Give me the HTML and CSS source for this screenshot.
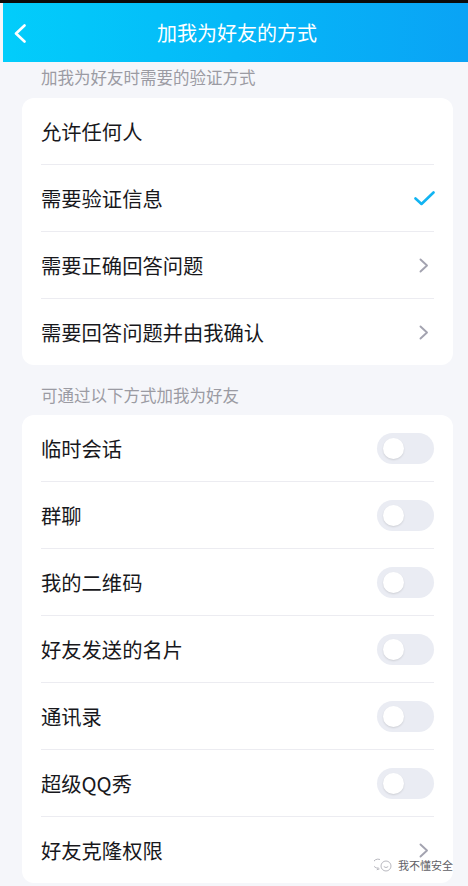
FILE: index.html
```html
<!DOCTYPE html>
<html lang="zh-CN">
<head>
<meta charset="utf-8">
<title>加我为好友的方式</title>
<link rel="stylesheet" href="styles.css">
</head>
<body>
<div class="page">
  <div class="statusbar"></div>
  <header class="navbar">
    <svg class="back" width="12" height="19" viewBox="0 0 12 19"><polyline points="10.5,1.5 2,9.5 10.5,17.5" fill="none" stroke="#fff" stroke-width="2.6" stroke-linecap="round" stroke-linejoin="round"/></svg>
    <h1 class="title">加我为好友的方式</h1>
  </header>

  <div class="section-title first">加我为好友时需要的验证方式</div>
  <div class="card">
    <div class="row"><span class="label">允许任何人</span></div>
    <div class="row"><span class="label">需要验证信息</span>
      <svg class="check" width="21" height="15" viewBox="0 0 21 15"><polyline points="1.5,7.5 7.5,13 19.5,1.5" fill="none" stroke="#12b4f2" stroke-width="2.6" stroke-linecap="round" stroke-linejoin="round"/></svg>
    </div>
    <div class="row"><span class="label">需要正确回答问题</span>
      <svg class="chev" width="10" height="15" viewBox="0 0 10 15"><polyline points="1.5,1.5 8,7.5 1.5,13.5" fill="none" stroke="#a3a3b0" stroke-width="1.9" stroke-linecap="round" stroke-linejoin="round"/></svg>
    </div>
    <div class="row"><span class="label">需要回答问题并由我确认</span>
      <svg class="chev" width="10" height="15" viewBox="0 0 10 15"><polyline points="1.5,1.5 8,7.5 1.5,13.5" fill="none" stroke="#a3a3b0" stroke-width="1.9" stroke-linecap="round" stroke-linejoin="round"/></svg>
    </div>
  </div>

  <div class="section-title">可通过以下方式加我为好友</div>
  <div class="card last">
    <div class="row"><span class="label">临时会话</span><span class="toggle"><span class="knob"></span></span></div>
    <div class="row"><span class="label">群聊</span><span class="toggle"><span class="knob"></span></span></div>
    <div class="row"><span class="label">我的二维码</span><span class="toggle"><span class="knob"></span></span></div>
    <div class="row"><span class="label">好友发送的名片</span><span class="toggle"><span class="knob"></span></span></div>
    <div class="row"><span class="label">通讯录</span><span class="toggle"><span class="knob"></span></span></div>
    <div class="row"><span class="label">超级QQ秀</span><span class="toggle"><span class="knob"></span></span></div>
    <div class="row"><span class="label">好友克隆权限</span>
      <svg class="chev" width="10" height="15" viewBox="0 0 10 15"><polyline points="1.5,1.5 8,7.5 1.5,13.5" fill="none" stroke="#a3a3b0" stroke-width="1.9" stroke-linecap="round" stroke-linejoin="round"/></svg>
    </div>
  </div>

  <div class="watermark">
    <svg width="19" height="14" viewBox="0 0 19 14"><path d="M6 1.5 a5 4.5 0 1 0 -1.5 8.6 l-1.6 1.6 2.6 -0.8" fill="none" stroke="#b9b9c0" stroke-width="1"/><circle cx="12" cy="8" r="5" fill="none" stroke="#b9b9c0" stroke-width="1"/><path d="M9.8 8.6 q2.2 2 4.4 0" fill="none" stroke="#b9b9c0" stroke-width="1"/></svg>
    <span>我不懂安全</span>
  </div>
</div>
</body>
</html>
```

FILE: styles.css
```css
html, body {
  margin: 0;
  padding: 0;
  background: #f5f6fa;
}
body {
  width: 468px;
  height: 886px;
  overflow: hidden;
  font-family: "Noto Sans CJK SC", "Noto Sans", sans-serif;
}
.page {
  position: relative;
  height: 886px;
  display: flex;
  flex-direction: column;
}
.statusbar {
  height: 3px;
  background: #0b0b0b;
}
.navbar {
  height: 59px;
  margin-left: 3px;
  background: linear-gradient(90deg, #02cdfb 0%, #05b8f8 50%, #0aa3f5 100%);
  display: flex;
  align-items: center;
  justify-content: center;
  position: relative;
}
.back {
  position: absolute;
  left: 11px;
  top: 21px;
}
.title {
  margin: 0 0 0 3px;
  font-size: 20px;
  font-weight: 400;
  color: #ffffff;
  line-height: 24px;
}
.section-title {
  font-size: 16.5px;
  line-height: 24px;
  color: #9b9ba3;
  padding: 18px 0 8px 41px;
}
.section-title.first {
  padding-top: 3px;
  padding-bottom: 9px;
}
.card {
  margin: 0 15px 0 22px;
  background: #ffffff;
  border-radius: 12px;
}
.row {
  margin: 0 19px 0 19px;
  height: 66px;
  display: flex;
  align-items: center;
  justify-content: space-between;
}
.row + .row {
  border-top: 1px solid #ececf1;
}
.label {
  font-size: 20.3px;
  color: #18181c;
  line-height: 28px;
}
.check {
  margin-right: -1px;
  margin-top: 1px;
}
.chev {
  margin-right: 5px;
}
.toggle {
  width: 57px;
  height: 31px;
  border-radius: 16px;
  background: #eaecf3;
  display: flex;
  align-items: center;
  padding-left: 6px;
  box-sizing: border-box;
}
.knob {
  width: 21px;
  height: 21px;
  border-radius: 50%;
  background: #ffffff;
  box-shadow: 0 1px 2px rgba(0, 0, 0, 0.12);
}
.watermark {
  position: absolute;
  right: 15px;
  bottom: 14px;
  display: flex;
  align-items: center;
  gap: 5px;
  font-size: 11px;
  line-height: 14px;
  color: #5f5f66;
  text-shadow: 0 0 2px #fff, 0 0 2px #fff;
}
```
